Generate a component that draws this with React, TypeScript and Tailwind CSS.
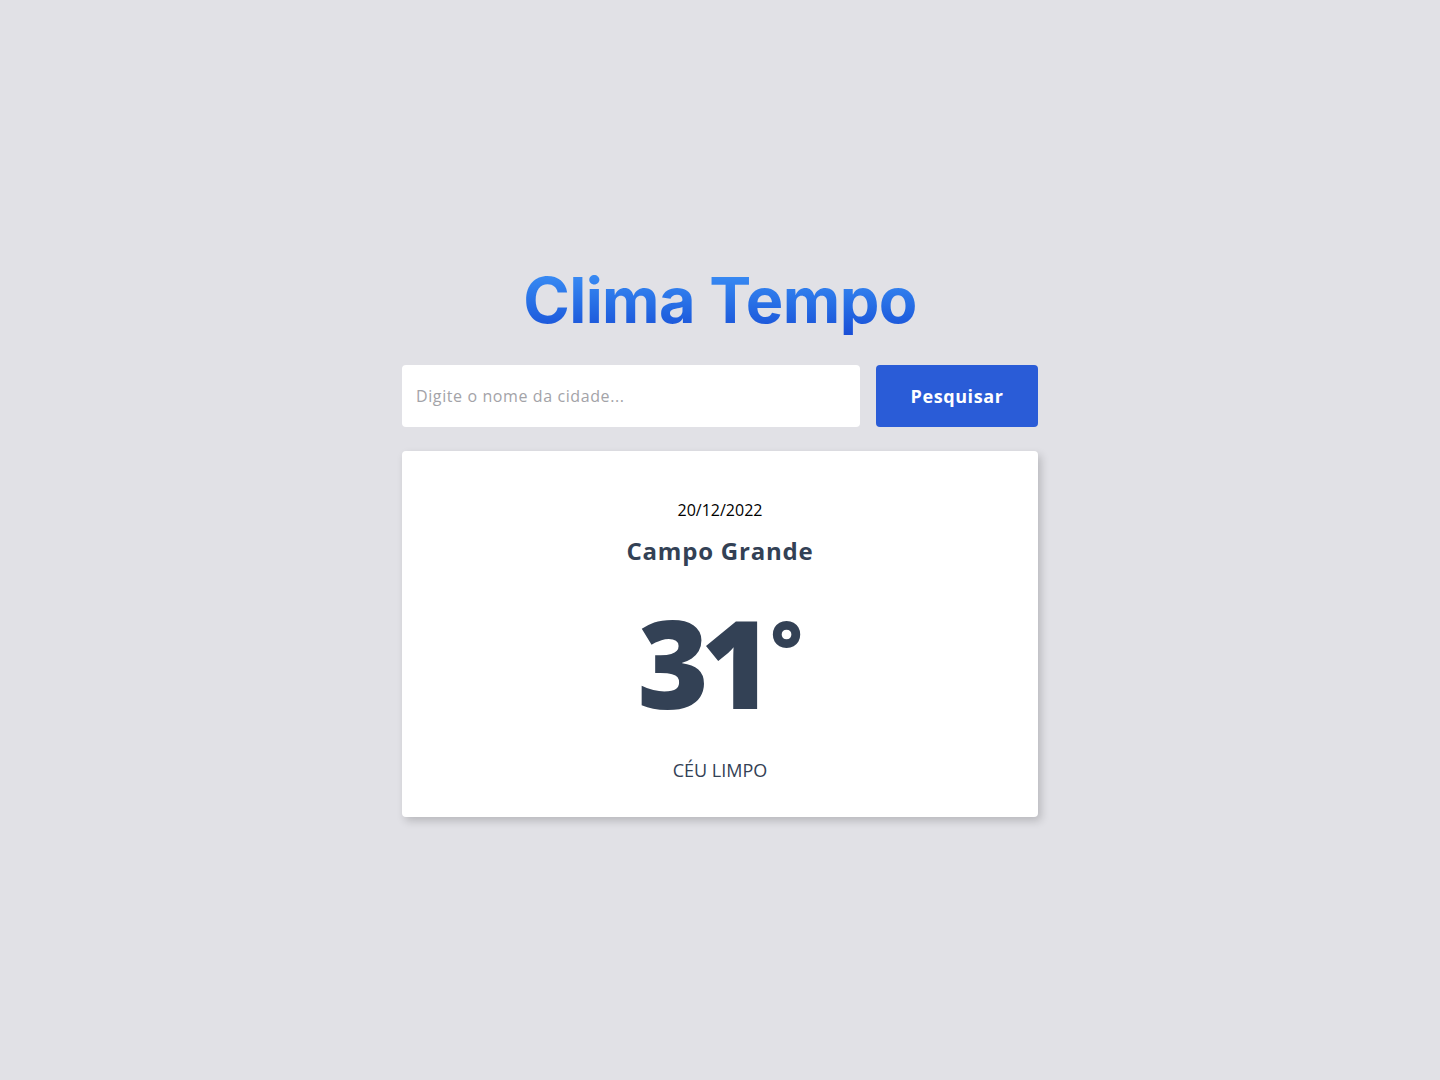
export default function App() {
	return (
		<div
			className="min-h-screen w-full bg-[#e1e1e6] flex flex-col items-center justify-center pt-1"
			style={{ fontFamily: '"Open Sans", "Noto Sans", sans-serif' }}
		>
			<h1
				className="text-[63px] leading-none font-bold bg-linear-to-b from-[#3d91f6] to-[#1a4ed6] bg-clip-text text-transparent pt-[1px] pb-[3px]"
				style={{ fontFamily: 'Inter, "Liberation Sans", sans-serif', letterSpacing: "-0.6px" }}
			>
				Clima Tempo
			</h1>

			<form
				className="mt-[30px] flex gap-4"
				onSubmit={(e) => e.preventDefault()}
			>
				<input
					type="text"
					placeholder="Digite o nome da cidade..."
					className="w-[458px] h-[62px] rounded bg-white px-[14px] text-base tracking-[0.6px] text-gray-700 placeholder:text-[#a3a3a8] outline-none"
				/>
				<button
					type="submit"
					className="w-[162px] h-[62px] rounded bg-[#2a5cd7] text-white text-lg font-bold tracking-[0.6px]"
				>
					Pesquisar
				</button>
			</form>

			<div className="mt-6 w-[636px] h-[366px] rounded bg-white shadow-[3px_4px_8px_rgba(0,0,0,0.18)] flex flex-col items-center pt-[47px] text-[#334155]">
				<p className="text-base leading-6 text-black">20/12/2022</p>
				<h2 className="mt-[13px] text-2xl leading-8 font-bold tracking-[0.8px]">Campo Grande</h2>
				<div className="mt-[30px] h-[130px] flex items-start">
					<span className="text-[122px] leading-[130px] font-extrabold tracking-[-8px]">31</span>
					<span className="text-[76px] leading-[76px] font-extrabold mt-[12px] ml-[6px]">°</span>
				</div>
				<p className="mt-[31px] text-lg leading-6 uppercase">Céu limpo</p>
			</div>
		</div>
	);
}
